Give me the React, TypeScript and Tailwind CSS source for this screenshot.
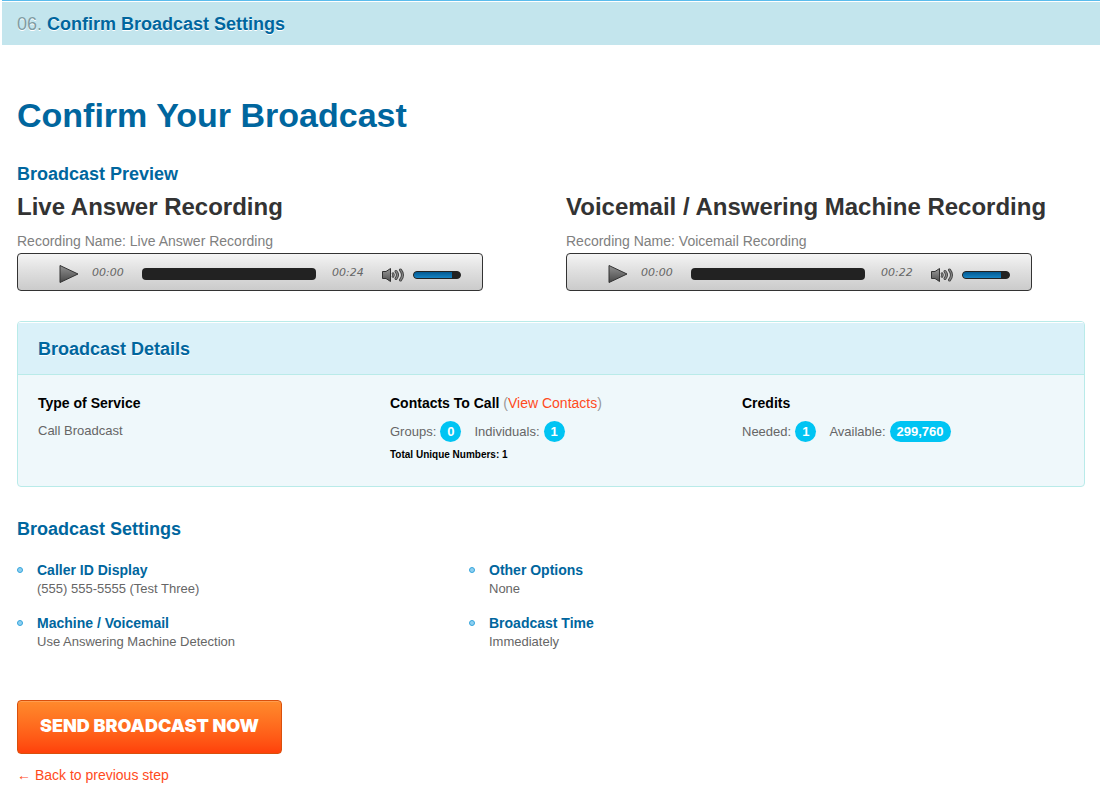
import { useState } from "react";
import type { ReactNode } from "react";

interface AudioPlayerProps {
  label: string;
  duration: string;
}

function PlayIcon() {
  return (
    <svg width="20" height="20" viewBox="0 0 20 20" aria-hidden="true">
      <defs>
        <linearGradient id="playFill" x1="0" y1="0" x2="0" y2="1">
          <stop offset="0" stopColor="#929292" />
          <stop offset="1" stopColor="#484848" />
        </linearGradient>
      </defs>
      <path d="M1 1.5L19 10L1 18.5Z" fill="url(#playFill)" stroke="#333" strokeLinejoin="round" />
    </svg>
  );
}

function VolumeIcon() {
  return (
    <svg width="23" height="16" viewBox="0 0 23 16" aria-hidden="true">
      <defs>
        <linearGradient id="volumeFill" x1="0" y1="0" x2="0" y2="1">
          <stop offset="0" stopColor="#999" />
          <stop offset="1" stopColor="#505050" />
        </linearGradient>
      </defs>
      <path d="M.5 4.5H4L8.5 1.5V14.5L4 11.5H.5Z" fill="url(#volumeFill)" stroke="#333" strokeLinejoin="round" />
      <g fill="none" strokeLinecap="round">
        <path d="M11 6.5Q12 8 11 9.5" stroke="#444" strokeWidth="2.6" />
        <path d="M14 4.5Q17 8 14 11.5" stroke="#444" strokeWidth="3" />
        <path d="M18.5 3Q22.5 8 18.5 13" stroke="#444" strokeWidth="3" />
        <path d="M11 6.5Q12 8 11 9.5" stroke="#888" />
        <path d="M14 4.5Q17 8 14 11.5" stroke="#888" strokeWidth="1.2" />
        <path d="M18.5 3Q22.5 8 18.5 13" stroke="#888" strokeWidth="1.2" />
      </g>
    </svg>
  );
}

function AudioPlayer({ label, duration }: AudioPlayerProps) {
  const [position, setPosition] = useState(0);
  const [volume, setVolume] = useState(82);

  return (
    <div className="flex h-[38px] w-[466px] max-w-full items-center rounded border border-[#333] bg-linear-to-b from-[#f4f4f4] via-[#dedede] to-[#cbcbcb] pl-[41px] pr-[21px] pt-1">
      <button type="button" aria-label={`Play ${label}`} className="mr-[13px] shrink-0 cursor-pointer">
        <PlayIcon />
      </button>
      <span className="w-[50px] shrink-0 pb-0.5 font-['DejaVu_Sans'] text-[11px] italic leading-4 text-[#666]">00:00</span>
      <input
        type="range"
        aria-label={`${label} position`}
        value={position}
        onChange={(e) => setPosition(Number(e.target.value))}
        className="h-3 min-w-0 flex-1 appearance-none rounded bg-[#222] [&::-webkit-slider-thumb]:opacity-0"
      />
      <span className="ml-4 w-[50px] shrink-0 pb-0.5 font-['DejaVu_Sans'] text-[11px] italic leading-4 text-[#666]">{duration}</span>
      <span className="mr-2 shrink-0 pt-0.5">
        <VolumeIcon />
      </span>
      <div className="relative mt-0.5 h-2 w-12 shrink-0 overflow-hidden rounded-full border border-[#222] bg-[#222]">
        <div className="h-full bg-linear-to-b from-[#035a93] to-[#1683c2]" style={{ width: `${volume}%` }} />
        <input
          type="range"
          aria-label={`${label} volume`}
          value={volume}
          onChange={(e) => setVolume(Number(e.target.value))}
          className="absolute inset-0 w-full appearance-none bg-transparent [&::-webkit-slider-thumb]:opacity-0"
        />
      </div>
    </div>
  );
}

interface RecordingProps {
  title: string;
  name: string;
  duration: string;
}

function Recording({ title, name, duration }: RecordingProps) {
  return (
    <div>
      <h3 className="text-2xl font-bold leading-8 text-[#333]">{title}</h3>
      <p className="mt-2 text-sm leading-5 text-[#808080]">Recording Name: {name}</p>
      <div className="mt-0.5">
        <AudioPlayer label={title} duration={duration} />
      </div>
    </div>
  );
}

function Badge({ children }: { children: ReactNode }) {
  return (
    <span className="ml-1 mr-[13px] inline-block rounded-full bg-[#00c4f3] px-[7px] text-[13px] font-bold leading-[21px] text-white">
      {children}
    </span>
  );
}

const settings = [
  { title: "Caller ID Display", value: "(555) 555-5555 (Test Three)" },
  { title: "Other Options", value: "None" },
  { title: "Machine / Voicemail", value: "Use Answering Machine Detection" },
  { title: "Broadcast Time", value: "Immediately" },
];

export default function App() {
  return (
    <div className="bg-white font-['Liberation_Sans',Arial,sans-serif] text-[#666]">
      {/* Step bar */}
      <header className="ml-0.5 mr-px border-t border-[#5bbcec] pt-px">
        <div className="bg-[#c3e5ed] px-[15px] pb-[9px] pt-2.5">
          <h2 className="text-lg font-bold leading-6 text-[#00669e] [text-shadow:0_1px_0_#fff]">
            <span className="font-normal text-[#7f9ca3]">06.</span> Confirm Broadcast Settings
          </h2>
        </div>
      </header>

      <main className="pl-[17px] pr-4 pt-12">
        <h1 className="text-[34px] font-bold leading-[44px] text-[#00669e]">Confirm Your Broadcast</h1>

        {/* Recordings */}
        <h2 className="mt-[25px] text-lg font-bold leading-6 text-[#00669e]">Broadcast Preview</h2>
        <section className="mt-[5px] grid grid-cols-[549fr_519fr]">
          <Recording title="Live Answer Recording" name="Live Answer Recording" duration="00:24" />
          <Recording title="Voicemail / Answering Machine Recording" name="Voicemail Recording" duration="00:22" />
        </section>

        {/* Details */}
        <section className="mt-[30px] overflow-hidden rounded border border-[#b9ebe9] bg-[#eff8fb]">
          <div className="border-b border-t border-b-[#b9ebe9] border-t-white bg-[#daf1f9] px-5 pb-[13px] pt-3.5">
            <h2 className="text-lg font-bold leading-6 text-[#00669e] [text-shadow:0_1px_0_#fff]">Broadcast Details</h2>
          </div>
          <div className="grid grid-cols-[352fr_352fr_322fr] px-5 pb-[23px] pt-[18px] text-[13px]">
            <div>
              <h3 className="text-sm font-bold leading-5 text-black">Type of Service</h3>
              <p className="mt-2 leading-5">Call Broadcast</p>
            </div>
            <div>
              <h3 className="text-sm font-bold leading-5 text-black">
                Contacts To Call{" "}
                <span className="font-normal text-[#999]">
                  (<a href="#contacts" className="text-[#ff4a1c]">View Contacts</a>)
                </span>
              </h3>
              <p className="mt-2 leading-[21px]">
                Groups:<Badge>0</Badge>Individuals:<Badge>1</Badge>
              </p>
              <p className="mt-[5px] text-[10px] font-bold leading-4 text-black">Total Unique Numbers: 1</p>
            </div>
            <div>
              <h3 className="text-sm font-bold leading-5 text-black">Credits</h3>
              <p className="mt-2 leading-[21px]">
                Needed:<Badge>1</Badge>Available:<Badge>299,760</Badge>
              </p>
            </div>
          </div>
        </section>

        {/* Settings */}
        <h2 className="mt-[30px] text-lg font-bold leading-6 text-[#00669e]">Broadcast Settings</h2>
        <ul className="mt-[19px] grid grid-cols-[452fr_616fr] gap-y-4">
          {settings.map((item) => (
            <li key={item.title} className="flex gap-3.5">
              <span className="mt-[7px] size-1.5 shrink-0 rounded-full border border-[#35a5dc] bg-[#8ed0f1]" />
              <div>
                <h3 className="text-sm font-bold leading-5 text-[#00669e]">{item.title}</h3>
                <p className="text-[13px] leading-[17px]">{item.value}</p>
              </div>
            </li>
          ))}
        </ul>

        {/* Actions */}
        <button
          type="button"
          className="mt-[50px] block cursor-pointer rounded border border-[#d9500c] bg-linear-to-b from-[#ff8a2c] to-[#ff400a] px-[22px] pb-[15px] pt-[13px] font-['Inter'] text-lg font-black leading-6 text-white shadow-[inset_0_1px_0_#ff9d50]"
        >
          SEND BROADCAST NOW
        </button>
        <a href="#previous" className="mt-[11px] inline-block text-sm leading-5 text-[#ff4a1c]">
          ← Back to previous step
        </a>
      </main>
    </div>
  );
}
